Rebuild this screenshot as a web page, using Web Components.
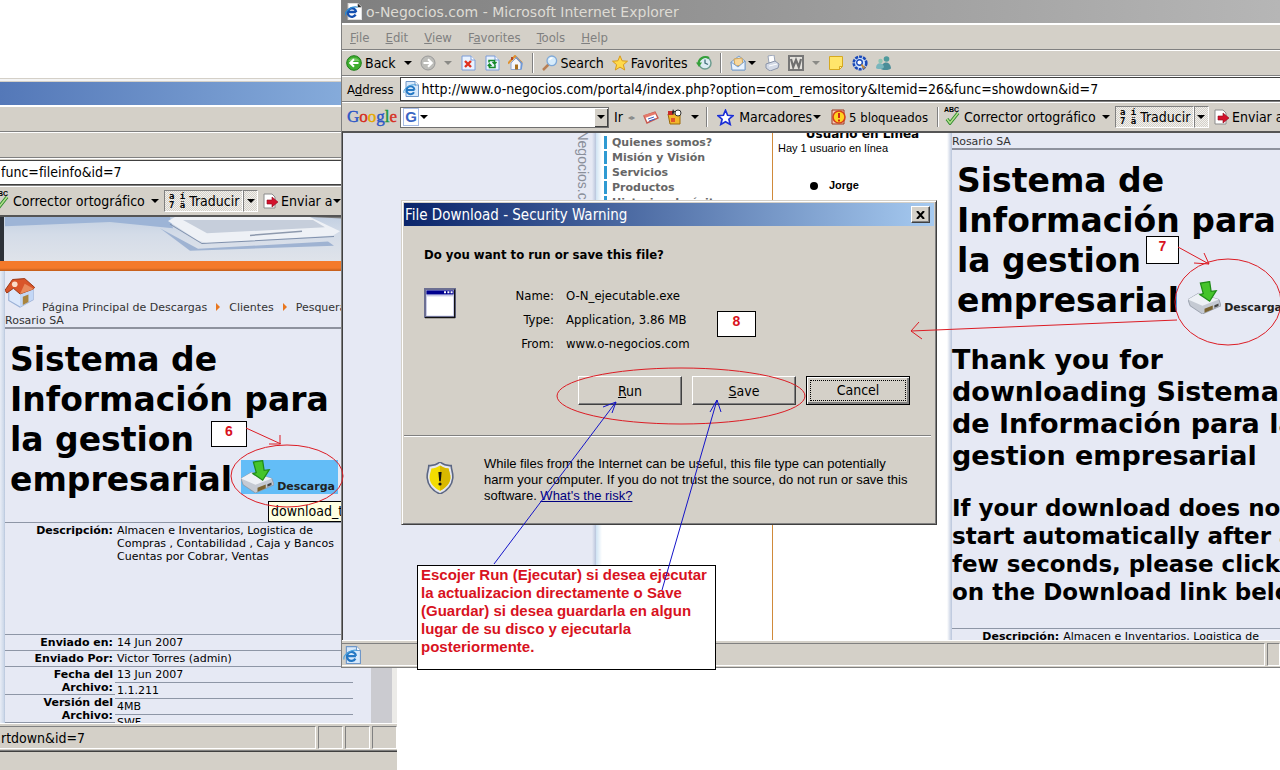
<!DOCTYPE html>
<html lang="es">
<head>
<meta charset="utf-8">
<title>o-Negocios.com - Descargas</title>
<style>
  html, body { margin: 0; height: 100%; }
  body { background: #fff; color: #000; overflow: hidden; position: relative;
    font-family: "DejaVu Sans Condensed", "DejaVu Sans", sans-serif; font-size: 14px; }
  .back { position: absolute; left: 0; top: 78px; bottom: 0; width: 397px; }
  .front { position: absolute; left: 341px; right: 0; top: 0; height: 668px; }
  .dialog { position: absolute; left: 401px; top: 200px; width: 536px; }
  .tip { position: absolute; left: 268px; top: 501px; }
  .n6 { position: absolute; left: 211px; top: 421px; width: 36px; height: 26px; }
  .n7 { position: absolute; left: 1146px; top: 236px; width: 33px; height: 28px; }
  .n8 { position: absolute; left: 717px; top: 311px; width: 39px; height: 26px; }
  .note { position: absolute; left: 417px; top: 565px; width: 299px; height: 105px; }
  .ink { position: absolute; inset: 0; }
</style>
</head>
<body>

<desk-window class="back" tone="blue" bare>
  <browser-bars slot="bars" short></browser-bars>
  <back-page slot="page"></back-page>
  <status-bar slot="status" cells="3" size="27" tail>rtdown&amp;id=7</status-bar>
</desk-window>
<tool-tip class="tip">download_t</tool-tip>

<desk-window class="front" caption="o-Negocios.com - Microsoft Internet Explorer">
  <browser-bars slot="bars"></browser-bars>
  <front-page slot="page"></front-page>
  <status-bar slot="status" cells="1" size="15"><ui-icon name="ie" size="18"></ui-icon></status-bar>
</desk-window>

<download-dialog class="dialog"></download-dialog>

<callout-note class="n6">6</callout-note>
<callout-note class="n7">7</callout-note>
<callout-note class="n8">8</callout-note>
<callout-note class="note" long>Escojer Run (Ejecutar) si desea ejecutar<br>la actualizacion directamente o Save<br>(Guardar) si desea guardarla en algun<br>lugar de su disco y ejecutarla<br>posteriormente.</callout-note>
<ink-layer class="ink"></ink-layer>

<script>
const define = (name, html, setup) => {
  const template = document.createElement('template');
  template.innerHTML = html;
  customElements.define(name, class extends HTMLElement {
    connectedCallback() {
      if (this.shadowRoot) return;
      const root = this.attachShadow({ mode: 'open' });
      root.append(template.content.cloneNode(true));
      if (setup) setup(this, root);
    }
  });
};

/* ---------- icons, all on a 16 unit grid unless noted ---------- */
const page = '<path d="M2 1h9l4 4v10H2z" fill="#eaf3ff" stroke="#7a9cd8"/><path d="M11 1v4h4" fill="#fff" stroke="#7a9cd8"/>';
const icons = {
  ie: '<path d="M3 .5h9l3.500 3.500v11.500H3z" fill="#d8e9fb" stroke="#6f97c8"/><path d="M12 .5V4h3.500" fill="#fff" stroke="#6f97c8"/><path d="M3.500 9h8M11 11.200A4 4 0 1 1 11.500 8.800" fill="none" stroke="#2478c4" stroke-width="2"/><path d="M1 12C-.5 8 7 2.500 13 4" fill="none" stroke="#4aa0dd"/>',
  ieTitle: '<path d="M3 .5h9l3.500 3.500v11.500H3z" fill="#fff" stroke="#ddd"/><path d="M12 .5V4h3.500" fill="#222"/><path d="M2.500 8.500h8M10 11A4 4 0 1 1 10.500 8.500" fill="none" stroke="#1550b0" stroke-width="2.200"/><path d="M0 12C-.5 8 6 2.500 12 4" fill="none" stroke="#2c8ad0" stroke-width="1.200"/>',
  back: '<circle cx="8" cy="8" r="7.300" fill="#3fae2f" stroke="#1d7d18"/><path d="M2.500 6A6 5 0 0 1 13.500 6" fill="#8fd67c" opacity=".7"/><path d="M12.500 8H4.500M8 4.200L4.200 8 8 11.800" fill="none" stroke="#fff" stroke-width="2"/>',
  forward: '<circle cx="8" cy="8" r="7" fill="#bdbdb9" stroke="#999"/><path d="M3.500 8h8M8 4.200L11.800 8 8 11.800" fill="none" stroke="#fff" stroke-width="2"/>',
  stop: page + '<path d="M5 6l6 6M11 6l-6 6" stroke="#e0301e" stroke-width="2.400"/>',
  refresh: page + '<path d="M5 7.500V5.500h5.500v3M8.500 7l2 2 2-2M11 9.500v3H5.500V9.500M3.800 11l1.700-2 2 2" fill="none" stroke="#168a2b" stroke-width="1.500"/>',
  home: '<path d="M3 8v6.500h10V8L8 3z" fill="#f4f6fc" stroke="#8ea6cf"/><path d="M0 8.500L7 1l7 7" fill="none" stroke="#e0912f" stroke-width="2"/><path d="M8 2l6 6.500-1 6" fill="none" stroke="#6d98d8" stroke-width="1.500"/><path d="M7 9.500h3v5H7z" fill="#a9701f"/><path d="M3 2h2v3H3z" fill="#b94a22"/>',
  search: '<path d="M6.500 9.500L1 15" stroke="#b87f55" stroke-width="2.500"/><circle cx="9.800" cy="5.800" r="4.800" fill="#d7ecfb" stroke="#7fa9d8" stroke-width="1.300"/><path d="M7.500 5a3 3 0 0 1 3-2" stroke="#fff" fill="none" stroke-width="1.300"/>',
  star: '<path d="M8 .8l2.100 5 5.400.4-4.100 3.500 1.300 5.300L8 12.100 3.300 15l1.300-5.300L.5 6.200l5.400-.4z" fill="#ffd94a" stroke="#d89a1c"/>',
  history: '<circle cx="9" cy="8" r="6" fill="#dcecf2" stroke="#6d9d90" stroke-width="1.500"/><path d="M9 4.500V8l3 1.500" stroke="#43707c" fill="none" stroke-width="1.300"/><path d="M13 3A7 7 0 0 0 2.500 9" fill="none" stroke="#35a03a" stroke-width="2.200"/><path d="M0 7.500h6L3 12z" fill="#35a03a"/>',
  mail: '<path d="M1 7l8-6 6 5v9H2z" fill="#cfe3f7" stroke="#7d9fc9"/><path d="M4 4l8-1 1 7-8 1z" fill="#f7d79b" stroke="#d2a55a"/><path d="M1 7l7 5 7-6v9H2z" fill="#e8f3ff" stroke="#7d9fc9"/>',
  print: '<path d="M4 1l6-1 1 7-6 1z" fill="#fff" stroke="#9aa4b8"/><path d="M2 9l9-3 4 3-1 4-8 3-4-3z" fill="#d4dae6" stroke="#8b95aa"/><path d="M5 11l8-2" stroke="#fff"/>',
  word: '<path d="M1 1h14v14H1z" fill="#e4e2dd" stroke="#777" stroke-width="2"/><path d="M3 4l2.200 8L8 5l2.800 7L13 4" fill="none" stroke="#6f6f6f" stroke-width="2.200"/>',
  notepad: '<path d="M1.500 1.500h13v10l-3 3h-10z" fill="#ffe56b" stroke="#d6a91f"/><path d="M14.500 11.500h-3v3z" fill="#fff3b5" stroke="#d6a91f"/>',
  research: '<circle cx="8" cy="8" r="6.300" fill="#cfe2fb" stroke="#1a49b8" stroke-width="2.600" stroke-dasharray="3 1"/><circle cx="7.500" cy="7.500" r="2.800" fill="#fff" stroke="#1a49b8" stroke-width="1.400"/><path d="M9.500 9.500l3 4" stroke="#c98a34" stroke-width="2"/>',
  messenger: '<circle cx="10.500" cy="4" r="2.800" fill="#4f9a9c"/><path d="M5 14c0-8 9-9 10-1 0 2-8 3-10 1z" fill="#4a8d98"/><circle cx="4.500" cy="6" r="2.200" fill="#8ec6b3"/><path d="M0 13c0-6 7-6 8-1 0 2-7 3-8 1z" fill="#79b6bd"/>',
  send: '<path d="M2 1h8l3 3v11H2z" fill="#fff" stroke="#8b8b8b"/><path d="M5 7h5V4l6 5-6 5v-3H5z" fill="#d3122c" stroke="#8f0a1c" stroke-width=".6"/>',
  news: '<path d="M1 7l11-4 3 6-11 5z" fill="#fff" stroke="#c8574d" stroke-width="1.400"/><path d="M1 6l11-3 1 2L2 9z" fill="#e57a6b"/><path d="M5 10l6-2M6 12l6-2" stroke="#3f62c4"/>',
  toys: '<path d="M1 5h12v10H3z" fill="#f2b62b" stroke="#9b6a0a"/><path d="M1 2h5v4H1z" fill="#c92a2a"/><circle cx="11" cy="4" r="3" fill="#fff" stroke="#333"/><path d="M4 9h4v4H4z" fill="#e2542a"/><path d="M6 0l1 2 2 .5-2 1L6 6 5 3.500z" fill="#222"/>',
  blueStar: '<path d="M8 1.200l2 4.700 5 .4-3.800 3.300 1.200 4.900L8 12l-4.400 2.500 1.200-4.900L1 6.300l5-.4z" fill="#fff" stroke="#1c2fd6" stroke-width="1.600"/>',
  blocked: '<path d="M2 1h12v14H2z" fill="#f3c7b8" stroke="#9c3b20"/><circle cx="9" cy="8" r="6" fill="#ffd321" stroke="#d5401a" stroke-width="1.600"/><path d="M8 4h2v5H8zM8 10.500h2v2H8z" fill="#d02a12"/>',
  check: '<path d="M3 10l3 4 8-10" fill="none" stroke="#2e8b2e" stroke-width="3.400"/><path d="M3 10l3 4 8-10" fill="none" stroke="#b3e08b" stroke-width="1.500"/>',
  house: '<path d="M2 6.500V12l6 3.500 7-4V5.500l-6-3z" fill="#dbe8fb" stroke="#9bb1d6" stroke-width=".6"/><path d="M8 8l7-3v6.500l-7 4z" fill="#c3d7f6"/><path d="M0 6.500L4 .8 10.500 .3 15.800 5l-.8.9L8 8.500 4.500 5.500 1 8z" fill="#d9552a" stroke="#97330f" stroke-width=".5"/><path d="M8 8.500L10.500 3l5 2.800z" fill="#e98a5c"/><circle cx="5.200" cy="3.300" r="1.500" fill="#fbdcc9"/><path d="M9.500 10l3-1.200v4l-3 1.600z" fill="#a9843d"/>',
  drive: '<path d="M0 9l5-3 10 3 1 3-9 4-6-4z" fill="#c5cad3" stroke="#8f96a3" stroke-width=".4"/><path d="M0 9l5-3 10 3-8 3z" fill="#eef1f6"/><path d="M8 13.500l4-1.600v1.800l-4 1.700z" fill="#7a6330"/><path d="M12.800 11.700l2-.8v1.200l-2 .9z" fill="#444"/><path d="M6 1l4.500-.7.700 4.700 2.500-.3-3.200 5.100-4.700-3.200 1.600-.5z" fill="#45c42b" stroke="#1f8a17" stroke-width=".6"/>',
  app: '<path d="M.5.500h15v14H.5z" fill="#c9cbe6" stroke="#6c6f92"/><path d="M1.200 1.200h13.600v2H1.200z" fill="#00008f"/><path d="M10 1.600h1v1h-1zM11.700 1.600h1v1h-1zM13.300 1.600h1v1h-1z" fill="#fff"/><path d="M1.500 4.200h13v9.600h-13z" fill="#fff"/><path d="M15.300.8v14H.5" fill="none" stroke="#111" stroke-width=".6"/>',
  shield: '<path d="M8 0c2 1.600 3.600 2 5.600 1.800 0 2.200 1 3.200.8 6.200-.4 4-3 6.500-6.400 8-3.400-1.500-6-4-6.400-8-.2-3 .8-4 .8-6.200C4.400 2 6 1.600 8 0z" fill="#e5e7ef" stroke="#5c6784" stroke-width=".8"/><path d="M8 1.800c1.600 1 2.800 1.500 4.300 1.500.2 1.700 1 2.700.9 4.700-.3 3-2.400 5-5.200 6.400C5.200 13 3.100 11 2.800 8c-.1-2 .7-3 .9-4.700C5.200 3.300 6.400 2.800 8 1.800z" fill="#f2dc00"/><path d="M8 1.800v12.600c2.800-1.400 4.900-3.400 5.200-6.400.1-2-.7-3-.9-4.700-1.500 0-2.700-.5-4.300-1.500z" fill="#d9b800"/><path d="M7.200 5h1.600l-.4 4.600h-.8z" fill="#111"/><circle cx="8" cy="11" r=".8" fill="#111"/>'
};
define('ui-icon', `<style>:host{display:block;flex:none;line-height:0}</style><svg viewBox="0 0 16 16" aria-hidden="true"></svg>`, (el, root) => {
  const size = el.getAttribute('size') || 16, svg = root.querySelector('svg');
  svg.setAttribute('width', size); svg.setAttribute('height', size);
  svg.innerHTML = icons[el.getAttribute('name')];
});

define('drop-arrow', `<style>:host{display:block;flex:none;border:4px solid transparent;border-top-color:currentColor;border-bottom:0}</style>`);

/* ---------- window frame ---------- */
define('desk-window', `<style>
  :host{display:flex;flex-direction:column;box-sizing:border-box;background:#d4d0c8;border-left:1px solid #808080;overflow:hidden}
  :host([bare]){border-left:0}
  header{flex:none;display:flex;align-items:center;gap:4px;height:23px;padding-left:3px;
    background:linear-gradient(90deg,#7f7f7f,#b6b6b6);color:#dedbd4;font:14px "DejaVu Sans",sans-serif;border-bottom:1px solid #fff}
  :host([bare]) header{margin-top:4px;background:linear-gradient(90deg,#5478b8,#8db3e0)}
  :host([bare]){box-shadow:inset 0 1px #d4d0c8,inset 0 3px #f4f4f4}
  main{flex:1;min-height:0;overflow:hidden;border-top:2px solid #555;display:grid}
  :host(:not([bare])) main{border-left:1px solid #404040}
</style>
<header><ui-icon name="ieTitle" size="17"></ui-icon><span></span></header>
<slot name="bars"></slot><main><slot name="page"></slot></main><slot name="status"></slot>`, (el, root) => {
  if (el.hasAttribute('caption')) root.querySelector('span').textContent = el.getAttribute('caption');
  else root.querySelector('header').replaceChildren();
});

/* ---------- spelling / translate / send tools ---------- */
define('google-actions', `<style>
  :host{display:flex;align-items:center;white-space:nowrap;flex:none}
  button{all:unset;display:flex;align-items:center;height:22px;flex:none}
  .spell{gap:4px;width:166px;margin-right:5px}
  .spell span{flex:1}
  .abc{position:relative;width:16px}
  .abc b{position:absolute;left:0;top:-3px;font:bold 7px "Liberation Sans",sans-serif}
  .on{background:repeating-conic-gradient(#d4d0c8 0 25%,#f2f1ee 0 50%) 0 0/2px 2px;border:1px solid;border-color:#808080 #fff #fff #808080;box-sizing:border-box}
  .tr{width:79px;gap:4px;padding-left:4px}
  .tr i{font:bold 9px/9px "DejaVu Sans Mono",monospace;white-space:pre}
  .dd{width:15px;justify-content:center}
  .send{margin-left:4px;gap:3px}
  .send drop-arrow{margin-left:-3px}
</style>
<button class="spell"><div class="abc"><b>ABC</b><ui-icon name="check"></ui-icon></div><span>Corrector ortográfico</span><drop-arrow></drop-arrow></button>
<button class="tr on"><i>a í<br>7 ä</i>Traducir</button><button class="dd on" aria-label="Idiomas"><drop-arrow></drop-arrow></button>
<button class="send"><ui-icon name="send"></ui-icon>Enviar a<drop-arrow></drop-arrow></button>`);

/* ---------- toolbars ---------- */
define('browser-bars', `<style>
  :host{display:block;flex:none}
  .row{display:flex;align-items:center;box-sizing:border-box;height:26px;border-bottom:1px solid #808080;border-top:1px solid #fff;white-space:nowrap;overflow:hidden}
  .menu{gap:16px;padding-left:8px;color:#808080;font-size:13px}
  .menu a{color:inherit;text-decoration:none}
  u{text-underline-offset:1px}
  .tools{padding-left:4px;gap:8px}
  button{all:unset;display:flex;align-items:center;gap:3px;flex:none}
  .off{color:#8a8a86}
  hr{margin:0;width:1px;height:20px;border:0;border-left:1px solid #808080;border-right:1px solid #fff;flex:none;box-sizing:border-box;width:2px}
  .addr{gap:6px;padding-left:5px}
  .addr label{font-size:13px}
  .field{flex:1;display:flex;align-items:center;gap:3px;height:24px;box-sizing:border-box;background:#fff;border:1px solid #404040;border-right:0;padding-left:2px}
  input{all:unset;flex:1;min-width:0;font:inherit}
  .google{height:29px;padding-left:5px;border-bottom:0}
  .logo{font:17px "Liberation Serif",serif;width:48px;flex:none;-webkit-text-stroke:.4px}
  .combo{display:flex;align-items:center;box-sizing:border-box;width:209px;height:21px;margin:0 5px;background:#fff;border:1px solid #707070;padding-left:2px;flex:none}
  .g{font:bold 15px/16px "Liberation Sans",sans-serif;color:#3a66c4;border:1px solid #a8bde6;width:14px;text-align:center;margin-right:1px}
  .dd{width:14px;height:19px;justify-content:center;background:#d4d0c8;box-shadow:inset 1px 1px #fff,inset -1px -1px #404040}
  .items{display:flex;align-items:center;gap:8px;margin-left:5px}
  .marks{display:flex;align-items:center;gap:9px;margin-left:7px}
  .marks .pop{font-size:13px}
  .marks drop-arrow{margin-left:-2px}
  .items b{color:#888;font-size:8px}
  google-actions{margin-left:5px}
  :host([short]) .addr{height:28px;padding:0}
  :host([short]) .google{padding:0}
  :host([short]) .field{height:25px;border-left:0;padding-left:1px}
  :host([short]) google-actions{margin-left:-7px}
</style>
<div class="row menu"></div><div class="row tools"></div><div class="row addr"></div><div class="row google"></div>`, (el, root) => {
  const row = (name, html) => { root.querySelector('.' + name).innerHTML = html; };
  if (el.hasAttribute('short')) {
    row('addr', '<div class="field"><input aria-label="Address" value="func=fileinfo&amp;id=7"></div>');
    row('google', '<google-actions></google-actions>');
    return;
  }
  row('menu', '<a href="#"><u>F</u>ile</a><a href="#"><u>E</u>dit</a><a href="#"><u>V</u>iew</a><a href="#">F<u>a</u>vorites</a><a href="#"><u>T</u>ools</a><a href="#"><u>H</u>elp</a>');
  const icon = (n, label) => `<button aria-label="${label}"><ui-icon name="${n}"></ui-icon></button>`;
  row('tools', `<button><ui-icon name="back"></ui-icon>Back</button><drop-arrow></drop-arrow>${icon('forward', 'Forward')}<drop-arrow class="off"></drop-arrow>
    ${icon('stop', 'Stop')}${icon('refresh', 'Refresh')}${icon('home', 'Home')}<hr><button><ui-icon name="search"></ui-icon>Search</button>
    <button><ui-icon name="star"></ui-icon>Favorites</button>${icon('history', 'History')}<hr>${icon('mail', 'Mail')}<drop-arrow style="margin-left:-6px"></drop-arrow>
    ${icon('print', 'Print')}${icon('word', 'Edit')}<drop-arrow class="off"></drop-arrow>${icon('notepad', 'Notes')}${icon('research', 'Research')}${icon('messenger', 'Messenger')}`);
  row('addr', '<label for="url">A<u>d</u>dress</label><div class="field"><ui-icon name="ie"></ui-icon><input id="url" value="http://www.o-negocios.com/portal4/index.php?option=com_remository&amp;Itemid=26&amp;func=showdown&amp;id=7"></div>');
  const c = ['#2a56c6', '#d62d20', '#e5a800', '#2a56c6', '#15963c', '#d62d20'];
  row('google', `<span class="logo">${[...'Google'].map((l, i) => `<span style="color:${c[i]}">${l}</span>`).join('')}</span>
    <div class="combo"><span class="g">G</span><drop-arrow></drop-arrow><input aria-label="Buscar"><button class="dd" aria-label="Historial"><drop-arrow></drop-arrow></button></div>
    <button>Ir</button><div class="items"><b>◂▸</b>${icon('news', 'Noticias')}${icon('toys', 'Juegos')}<drop-arrow></drop-arrow></div>
    <div class="marks"><hr><button><ui-icon name="blueStar" size="17"></ui-icon><span style="margin-left:2px">Marcadores</span><drop-arrow></drop-arrow></button>
    <button class="pop"><ui-icon name="blocked"></ui-icon>5 bloqueados</button><hr></div><google-actions></google-actions>`);
});

/* ---------- status bar ---------- */
define('status-bar', `<style>
  :host{display:block;flex:none;background:#d4d0c8;border-top:1px solid #fff}
  .bar{display:flex;height:25px;padding-top:1px;gap:2px;border-bottom:1px solid #808080}
  .bar>*{box-sizing:border-box;border:1px solid;border-color:#808080 #fff #fff #808080;height:23px;margin-top:1px}
  .text{flex:1;border-left:0;display:flex;align-items:center;padding-left:1px}
  .tail{height:18px;border-top:1px solid #404040}
</style><div class="bar"><div class="text"><slot></slot></div></div>`, (el, root) => {
  for (let i = 0; i < +el.getAttribute('cells'); i++) {
    const cell = document.createElement('div');
    cell.style.width = (el.getAttribute('size') - 2) + 'px';
    root.querySelector('.bar').append(cell);
  }
  if (el.hasAttribute('tail')) root.append(Object.assign(document.createElement('div'), { className: 'tail' }));
});

/* ---------- download link beside a title ---------- */
define('file-title', `<style>
  :host{display:block;border-top:2px solid #8e929e;padding:11px 0 0 5px;white-space:nowrap}
  h1{margin:0;font:bold 33px/40px "DejaVu Sans",sans-serif}
  a{display:inline-flex;vertical-align:top;align-items:flex-end;height:34px;width:97px;gap:3px;margin-left:9px;font:bold 11px/14px "DejaVu Sans",sans-serif;color:#222;text-decoration:none}
  ui-icon{align-self:flex-start}
  :host([active]) a{background:#63bdf7}
</style><h1>Sistema de<br>Información para<br>la gestion<br>empresarial<a href="#"><ui-icon name="drive" size="33"></ui-icon>Descarga<slot></slot></a></h1>`);

define('file-details', `<style>
  :host{display:block;font:11px/13px "DejaVu Sans",sans-serif;white-space:nowrap}
  table{border-collapse:collapse;width:100%}
  th,td{border-top:1px solid #8e96a6;padding:1px 0;vertical-align:top;text-align:left}
  th{width:108px;text-align:right;padding-right:4px}
  .tall{height:112px}
  .two{display:grid;grid-template-columns:110px 238px;border-top:1px solid #8e96a6}
  dt,dd{margin:0}
  dt{text-align:right;font-weight:bold;padding:1px 2px 0 0;border-bottom:1px solid #8e96a6}
  dd{padding:1px 0 1px 2px;border-bottom:1px solid #8e96a6}
</style>
<table><tr class="tall"><th>Descripción:</th><td>Almacen e Inventarios, Logistica de<br>Compras , Contabilidad , Caja y Bancos<br>Cuentas por Cobrar, Ventas</td></tr></table>`, (el, root) => {
  if (!el.hasAttribute('full')) return;
  root.querySelector('tbody').insertAdjacentHTML('beforeend', '<tr><th>Enviado en:</th><td>14 Jun 2007</td></tr><tr><th>Enviado Por:</th><td>Victor Torres (admin)</td></tr>');
  root.querySelector('table').insertAdjacentHTML('afterend', '<dl class="two" style="margin:0"><div><dt>Fecha del<br>Archivo:</dt><dt>Versión del<br>Archivo:</dt></div><div><dd>13 Jun 2007</dd><dd>1.1.211</dd><dd>4MB</dd><dd>SWF</dd></div></dl>');
});

/* ---------- web page in the rear window ---------- */
define('back-page', `<style>
  :host{display:block;overflow:hidden;font:11px/13px "DejaVu Sans",sans-serif;background:#e6e9f4}
  .photo{display:block;width:100%;height:44px}
  .band{height:10px;background:linear-gradient(#f47a2a 70%,#c05c1a)}
  .cols{display:grid;grid-template-columns:5px 1fr 21px 5px;height:100%}
  .edge{background:linear-gradient(90deg,#e9edf6,#cfdaea 70%,#b8c6dc)}
  .scroll{background:#cbcbd0}.rim{background:#ecebe8}
  nav{display:flex;align-items:flex-end;gap:7px;height:43px;white-space:nowrap;color:#333}
  nav ui-icon{align-self:center}
  nav a{color:inherit;text-decoration:none} nav i{border:4px solid transparent;border-left-color:#e8761f;border-right:0;margin:0 2px 3px}
  p{margin:0;height:13px;color:#333}
  file-details{margin-top:22px}
</style>
<svg class="photo" viewBox="0 0 397 43" preserveAspectRatio="none" aria-hidden="true">
  <defs><linearGradient id="s" x2="0" y2="1"><stop stop-color="#c3d0e2"/><stop offset=".4" stop-color="#d4dce8"/><stop offset="1" stop-color="#dfe3ea"/></linearGradient></defs>
  <path fill="url(#s)" d="M0 0h397v43H0z"/><path fill="#9db4d6" d="M5 0h165l3 11L110 5 5 9z"/><path fill="#9fb3d2" d="M160 11l38 20 130-7 6 4-144 5z"/>
  <path fill="#eef1f6" d="M168 4l30 19 10 3 125-8 7-4-30-14H175z"/><path fill="#c6cedb" d="M183 3h130l12 7-118 6z"/><path d="M250 18l52-4" stroke="#8d99ad" stroke-width="1.500"/><path d="M170 7l32 19 132-7" fill="none" stroke="#7f90ac"/><path fill="#2c3138" d="M0 0h4v43H0z"/><path fill="#777" d="M310 0h87v4z"/>
</svg>
<div class="band"></div>
<div class="cols"><div class="edge"></div><div>
<nav><ui-icon name="house" size="30"></ui-icon><a href="#">Página Principal de Descargas</a><i></i><a href="#">Clientes</a><i></i><a href="#">Pesquera</a></nav>
<p>Rosario SA</p><file-title active></file-title><file-details full></file-details></div><div class="scroll"></div><div class="rim"></div></div>`);

/* ---------- web page in the front window ---------- */
define('front-page', `<style>
  :host{display:grid;grid-template-columns:253px 177px 174px 1fr;overflow:hidden;background:#fff;font:11px/15px "DejaVu Sans",sans-serif;min-height:0}
  :host>*{min-width:0;overflow:hidden}
  .side{background:linear-gradient(270deg,#b9c5dc,#e6e9f4 4px);display:flex;justify-content:flex-end}
  .side span{writing-mode:vertical-rl;font:14px/15px "Liberation Sans",sans-serif;color:#8a8f9a;margin:-15px 6px 0 0}
  .menu{background:linear-gradient(90deg,#cfe3f3,#fff 6px);border-right:1px solid #d08a3a;box-sizing:border-box}
  ul{list-style:none;margin:3px 0 0 8px;padding:0}
  li a{display:block;border-left:3px solid #2f9ad2;padding-left:5px;margin-bottom:2px;line-height:13px;font-weight:bold;color:#666;text-decoration:none}
  .users{font-family:"Liberation Sans",sans-serif;padding-left:5px}
  .users b{display:block;text-align:center;font:bold 12px/14px "DejaVu Sans",sans-serif;margin-top:-6px}
  .users div{height:37px}
  .users p{margin:0 0 0 32px;display:flex;align-items:center;gap:11px;font-weight:bold}
  .users i{width:8px;height:8px;border-radius:4px;background:#000}
  .body{background:linear-gradient(90deg,#fff,#b9c5dc 5px,#e6e9f4 5px);padding-left:5px;white-space:nowrap}
  .crumb{margin:1px 0 0;height:14px;color:#333}
  h2{margin:23px 0 0;font:bold 27px/32px "DejaVu Sans",sans-serif}
  h3{margin:22px 0;font:bold 23px/28px "DejaVu Sans",sans-serif}
</style>
<div class="side"><span>o-Negocios.com</span></div>
<div class="menu"><ul><li><a href="#">Quienes somos?</a></li><li><a href="#">Misión y Visión</a></li><li><a href="#">Servicios</a></li><li><a href="#">Productos</a></li><li><a href="#">Historias de éxito</a></li></ul></div>
<div class="users"><b>Usuario en Linea</b><div>Hay 1 usuario en línea</div><p><i></i>Jorge</p></div>
<div class="body"><p class="crumb">Rosario SA</p><file-title>s</file-title>
<h2>Thank you for<br>downloading Sistema<br>de Información para la<br>gestion empresarial</h2>
<h3>If your download does not<br>start automatically after a<br>few seconds, please click<br>on the Download link below</h3><file-details></file-details></div>`);

/* ---------- security dialog ---------- */
define('download-dialog', `<style>
  :host{display:block;box-sizing:border-box;background:#d4d0c8;border:1px solid;border-color:#d4d0c8 #404040 #404040 #d4d0c8;box-shadow:inset 1px 1px #fff,inset -1px -1px #808080;padding:2px;font-size:13px}
  header{display:flex;align-items:center;justify-content:space-between;height:23px;padding:0 4px 0 1px;color:#fff;font-size:15px;background:linear-gradient(90deg,#0a246a,#a6caf0)}
  button{box-sizing:border-box;font:inherit;color:#000;background:#d4d0c8;border:1px solid;border-color:#fff #404040 #404040 #fff;box-shadow:inset -1px -1px #808080;padding:0}
  .x{width:19px;height:17px;display:grid;place-items:center}
  strong{display:block;margin:20px 0 0 20px;line-height:18px}
  .file{display:flex;margin:20px 0 0 20px;align-items:flex-start}
  .file ui-icon{margin-top:4px}
  dl{display:grid;grid-template-columns:98px 1fr;column-gap:12px;margin:0;line-height:24px}
  dt{text-align:right}dd{margin:0}
  .acts{display:flex;justify-content:flex-end;gap:10px;margin:20px 24px 0 0}
  .acts button{width:104px;height:29px;font-size:14px}
  .acts .def{border:1px solid #000;box-shadow:inset 1px 1px #fff,inset -2px -2px #808080;padding:3px}
  .def span{display:block;border:1px dotted #000;line-height:19px}
  hr{margin:30px 3px 0 0;border:0;border-top:1px solid #808080;border-bottom:1px solid #fff}
  .warn{display:flex;gap:28px;margin:19px 20px 16px 20px;font:13px/16px "Liberation Sans",sans-serif;white-space:nowrap}
  .warn ui-icon{margin:6px 0 -6px}
  p{margin:0 0 2px}a{color:#000080}
</style>
<header>File Download - Security Warning<button class="x" aria-label="Close"><svg width="9" height="8"><path d="M1 0l7 8M8 0L1 8" stroke="#000" stroke-width="2"/></svg></button></header>
<strong>Do you want to run or save this file?</strong>
<div class="file"><ui-icon name="app" size="32"></ui-icon><dl><dt>Name:</dt><dd>O-N_ejecutable.exe</dd><dt>Type:</dt><dd>Application, 3.86 MB</dd><dt>From:</dt><dd>www.o-negocios.com</dd></dl></div>
<div class="acts"><button><u>R</u>un</button><button><u>S</u>ave</button><button class="def"><span>Cancel</span></button></div>
<hr><div class="warn"><ui-icon name="shield" size="32"></ui-icon><p>While files from the Internet can be useful, this file type can potentially<br>harm your computer. If you do not trust the source, do not run or save this<br>software. <a href="#">What's the risk?</a></p></div>`);

define('tool-tip', `<style>:host{display:block;box-sizing:border-box;width:73px;height:21px;overflow:hidden;background:#ffffe1;border:1px solid #000;border-right:0;padding-left:2px;line-height:19px}</style><slot></slot>`);

define('callout-note', `<style>
  :host{display:block;box-sizing:border-box;background:#fff;border:1px solid #000;color:#d8121e;font:bold 14px/18px "Liberation Sans",sans-serif;text-align:center}
  :host([long]){text-align:left;font-size:15px;padding:0 3px;white-space:nowrap}
</style><slot></slot>`);

/* ---------- hand-drawn rings and arrows ---------- */
define('ink-layer', `<style>:host{display:block;pointer-events:none;overflow:hidden}svg{display:block;width:100%;height:100%}</style>
<svg fill="none" stroke="#dc1c24" aria-hidden="true">
  <ellipse cx="287" cy="476" rx="56" ry="31"/><ellipse cx="681" cy="396" rx="124" ry="28"/><ellipse cx="1228" cy="302" rx="53" ry="43"/>
  <path d="M246 428l35 16M280 435v9h-11M1178 247l31 17M1204 253l5 11-15-1M1177 320L911 331M919 322l-8 9 11 8"/>
  <path stroke="#1414c8" d="M494 564L616 402M603 407l13-5-4 11M662 590L717 400M710 412l7-12 4 12"/>
</svg>`);
</script>
</body>
</html>
